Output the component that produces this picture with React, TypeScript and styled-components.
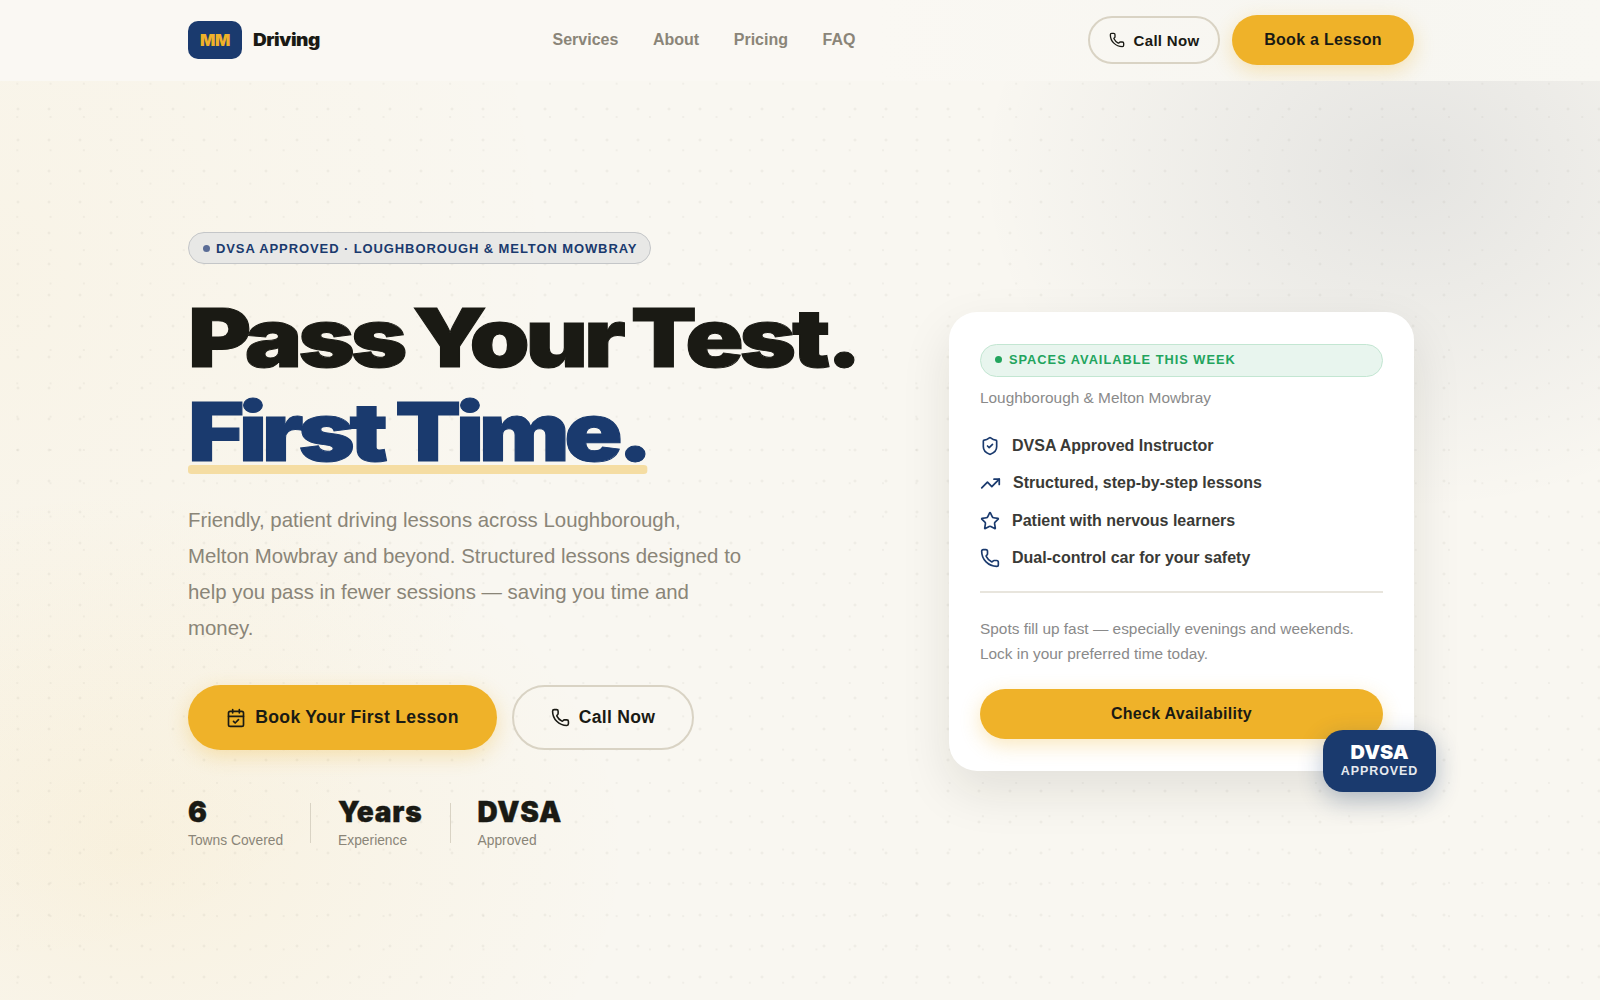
import React from "react";
import styled, { createGlobalStyle } from "styled-components";
import { CalendarCheck, Phone, ShieldCheck, Star, TrendingUp } from "lucide-react";

const Global = createGlobalStyle`
  * { box-sizing: border-box; }
  html, body { margin: 0; padding: 0; }
  body {
    font-family: "Liberation Sans", Arial, sans-serif;
    background: #faf8f3;
    color: #1a1a14;
  }
`;

const Display = `"Inter", "Liberation Sans", sans-serif`;

const Page = styled.div`
  min-height: 1000px;
  display: flex;
  flex-direction: column;
  background-color: #faf8f3;
`;

const Nav = styled.header`
  height: 81px;
  background: linear-gradient(90deg, #faf8f3 0%, #faf8f3 55%, #f7f6f1 85%, #f8f7f2 100%);
`;

const NavInner = styled.div`
  width: 1226px;
  height: 80px;
  margin-left: 188px;
  display: flex;
  align-items: center;
  justify-content: space-between;
`;

const Brand = styled.div`
  display: flex;
  align-items: center;
  gap: 11px;
  width: 132px;
`;

const BrandMark = styled.div`
  width: 54px;
  height: 38px;
  border-radius: 10px;
  background: #1a3a6e;
  color: #efb229;
  font-family: ${Display};
  font-weight: 900;
  font-size: 16px;
  letter-spacing: -0.3px;
  padding-bottom: 1px;
  display: flex;
  align-items: center;
  justify-content: center;
`;

const BrandName = styled.span`
  display: inline-block;
  transform: scaleX(1.12);
  transform-origin: left center;
  font-family: ${Display};
  font-weight: 900;
  font-size: 17px;
  letter-spacing: -0.4px;
  color: #1a1a14;
`;

const NavLinks = styled.nav`
  display: flex;
  gap: 34.6px;
  padding-bottom: 1px;
`;

const NavLink = styled.a`
  font-size: 16px;
  font-weight: 700;
  color: #8a8578;
`;

const NavActions = styled.div`
  display: flex;
  align-items: center;
  gap: 12px;
`;

const Pill = styled.button<{ $primary?: boolean; $h: number; $w?: number; $fs: number }>`
  display: inline-flex;
  align-items: center;
  justify-content: center;
  gap: 9px;
  height: ${(p) => p.$h}px;
  width: ${(p) => (p.$w ? `${p.$w}px` : "100%")};
  border-radius: 999px;
  font-family: inherit;
  font-weight: 700;
  font-size: ${(p) => p.$fs}px;
  letter-spacing: 0.3px;
  color: #1a1a14;
  padding: 0;
  background: ${(p) => (p.$primary ? "#efb229" : "transparent")};
  border: ${(p) => (p.$primary ? "none" : "2px solid #d9d3c4")};
  box-shadow: ${(p) => (p.$primary ? "0 6px 20px rgba(240, 180, 41, 0.3)" : "none")};
`;

const Hero = styled.main`
  flex: 1;
  display: flex;
  background-color: #f9f7f1;
  background-image:
    radial-gradient(circle, rgba(138, 133, 120, 0.12) 1px, transparent 1.2px),
    radial-gradient(circle, rgba(138, 133, 120, 0.08) 1px, transparent 1.2px),
    radial-gradient(ellipse 500px 360px at 130px 770px, rgba(240, 180, 41, 0.09), transparent 100%),
    radial-gradient(ellipse 560px 700px at 0 200px, rgba(240, 180, 41, 0.05), transparent 100%),
    radial-gradient(ellipse 430px 340px at 1410px 90px, rgba(26, 40, 70, 0.09), transparent 100%);
  background-size: 31px 31px, 33.3px 33.3px, auto, auto, auto;
  background-position: 2.5px 12.5px, 0.65px 19.35px, 0 0, 0 0, 0 0;
`;

const HeroInner = styled.div`
  width: 1226px;
  margin-left: 188px;
  display: grid;
  grid-template-columns: 1fr 465px;
  align-items: center;
`;

const Left = styled.div`
  margin-top: 2px;
  display: flex;
  flex-direction: column;
  align-items: flex-start;
`;

const Eyebrow = styled.div`
  display: inline-flex;
  align-items: center;
  gap: 6px;
  height: 32px;
  width: 463px;
  padding: 0 14px;
  border-radius: 999px;
  background: #e8e8e6;
  border: 1px solid #c4c6c8;
  font-size: 13px;
  font-weight: 700;
  letter-spacing: 0.9px;
  color: #1a3a6e;
  white-space: nowrap;
`;

const Dot = styled.span<{ $c: string }>`
  width: 7px;
  height: 7px;
  border-radius: 50%;
  background: ${(p) => p.$c};
  flex: none;
`;

const Heading = styled.h1`
  margin: 27px 0 0;
  font-family: ${Display};
  font-weight: 900;
  font-size: 81px;
  line-height: 94px;
  letter-spacing: -3.5px;
  word-spacing: -5px;
  color: #1a1a14;
  -webkit-text-stroke: 1px currentColor;
`;

const HeadLine = styled.span`
  display: block;
  width: max-content;
  transform: scaleX(1.19);
  transform-origin: left center;
`;

const Accent = styled.span`
  position: relative;
  display: block;
  width: max-content;
  letter-spacing: -4.6px;
  word-spacing: -1px;
  transform: scaleX(1.19);
  transform-origin: left center;
  color: #1a3a6e;

  &::after {
    content: "";
    position: absolute;
    left: 0;
    right: 0;
    bottom: 5px;
    height: 9px;
    border-radius: 3px;
    background: #f5dda3;
  }
`;

const Lead = styled.p`
  margin: 23px 0 0;
  width: 556px;
  font-size: 20.4px;
  line-height: 36px;
  color: #8a8578;
`;

const CtaRow = styled.div`
  margin-top: 39px;
  display: flex;
  gap: 15px;
`;

const Stats = styled.div`
  margin-top: 45px;
  display: flex;
  align-items: center;
  gap: 27px;
`;

const StatDivider = styled.span`
  width: 1px;
  height: 40px;
  background: #d9d3c4;
`;

const StatValue = styled.div`
  font-family: ${Display};
  font-weight: 900;
  font-size: 28px;
  line-height: 34px;
  letter-spacing: 0.8px;
  color: #1a1a14;
  -webkit-text-stroke: 0.4px currentColor;
`;

const StatLabel = styled.div`
  font-size: 13.8px;
  line-height: 20px;
  margin-top: 2px;
  color: #8a8578;
`;

const CardWrap = styled.div`
  position: relative;
  margin-top: 2px;
`;

const Card = styled.section`
  background: #fff;
  border-radius: 28px;
  padding: 32px 31px;
  box-shadow: 0 20px 50px rgba(26, 26, 20, 0.1);
`;

const Availability = styled.div`
  height: 33px;
  display: flex;
  align-items: center;
  gap: 7px;
  padding: 0 14px 1px;
  border-radius: 999px;
  background: #e8f5ee;
  border: 1px solid #c3e6d2;
  font-size: 12.8px;
  font-weight: 700;
  letter-spacing: 1px;
  color: #22a45d;
`;

const Location = styled.div`
  margin-top: 11px;
  font-size: 15.4px;
  line-height: 20px;
  color: #8a8a8a;
`;

const Features = styled.ul`
  list-style: none;
  margin: 26px 0 0;
  padding: 0;
  display: flex;
  flex-direction: column;
  gap: 13.4px;
`;

const Feature = styled.li`
  display: flex;
  align-items: center;
  gap: 12px;
  height: 24px;
  font-size: 16px;
  font-weight: 700;
  color: #3a3a36;

  svg {
    color: #1a3a6e;
    flex: none;
  }
`;

const Rule = styled.hr`
  margin: 21px 0 0;
  border: 0;
  height: 2px;
  background: #e8e5dd;
`;

const Note = styled.p`
  margin: 23px 0 0;
  font-size: 15.4px;
  line-height: 25px;
  color: #8a8a8a;
`;

const CardAction = styled.div`
  margin-top: 23px;
`;

const Badge = styled.div`
  position: absolute;
  right: -22px;
  bottom: -21px;
  width: 113px;
  height: 62px;
  border-radius: 20px;
  background: #1a3a6e;
  color: #fff;
  display: flex;
  flex-direction: column;
  align-items: center;
  justify-content: center;
  box-shadow: 0 8px 24px rgba(26, 58, 110, 0.3);
`;

const BadgeTitle = styled.div`
  font-family: ${Display};
  font-weight: 900;
  font-size: 19px;
  line-height: 20px;
  transform: scaleX(1.05);
`;

const BadgeSub = styled.div`
  font-size: 12.5px;
  font-weight: 700;
  line-height: 16px;
  letter-spacing: 0.9px;
  color: #e6e9ef;
`;

const features = [
  { icon: ShieldCheck, size: 20, text: "DVSA Approved Instructor" },
  { icon: TrendingUp, size: 21, text: "Structured, step-by-step lessons" },
  { icon: Star, size: 20, text: "Patient with nervous learners" },
  { icon: Phone, size: 20, text: "Dual-control car for your safety" },
];

const stats = [
  { value: "6", label: "Towns Covered" },
  { value: "Years", label: "Experience" },
  { value: "DVSA", label: "Approved" },
];

export default function App() {
  return (
    <Page>
      <Global />
      <Nav>
        <NavInner>
          <Brand>
            <BrandMark>MM</BrandMark>
            <BrandName>Driving</BrandName>
          </Brand>
          <NavLinks>
            <NavLink>Services</NavLink>
            <NavLink>About</NavLink>
            <NavLink>Pricing</NavLink>
            <NavLink>FAQ</NavLink>
          </NavLinks>
          <NavActions>
            <Pill $h={48} $w={132} $fs={15}>
              <Phone size={16} />
              Call Now
            </Pill>
            <Pill $primary $h={50} $w={182} $fs={16}>
              Book a Lesson
            </Pill>
          </NavActions>
        </NavInner>
      </Nav>
      <Hero>
        <HeroInner>
          <Left>
            <Eyebrow>
              <Dot $c="#5a6c96" />
              DVSA APPROVED · LOUGHBOROUGH &amp; MELTON MOWBRAY
            </Eyebrow>
            <Heading>
              <HeadLine>Pass Your Test.</HeadLine>
              <Accent>First Time.</Accent>
            </Heading>
            <Lead>
              Friendly, patient driving lessons across Loughborough, Melton Mowbray and beyond.
              Structured lessons designed to help you pass in fewer sessions — saving you time and
              money.
            </Lead>
            <CtaRow>
              <Pill $primary $h={65} $w={309} $fs={17.6}>
                <CalendarCheck size={20} />
                Book Your First Lesson
              </Pill>
              <Pill $h={65} $w={182} $fs={17.6}>
                <Phone size={19} />
                Call Now
              </Pill>
            </CtaRow>
            <Stats>
              {stats.map((s, i) => (
                <React.Fragment key={s.value}>
                  {i > 0 && <StatDivider />}
                  <div>
                    <StatValue>{s.value}</StatValue>
                    <StatLabel>{s.label}</StatLabel>
                  </div>
                </React.Fragment>
              ))}
            </Stats>
          </Left>
          <CardWrap>
            <Card>
              <Availability>
                <Dot $c="#22a45d" />
                SPACES AVAILABLE THIS WEEK
              </Availability>
              <Location>Loughborough &amp; Melton Mowbray</Location>
              <Features>
                {features.map((f) => (
                  <Feature key={f.text}>
                    <f.icon size={f.size} />
                    {f.text}
                  </Feature>
                ))}
              </Features>
              <Rule />
              <Note>
                Spots fill up fast — especially evenings and weekends. Lock in your preferred time
                today.
              </Note>
              <CardAction>
                <Pill $primary $h={50} $fs={16}>
                  Check Availability
                </Pill>
              </CardAction>
            </Card>
            <Badge>
              <BadgeTitle>DVSA</BadgeTitle>
              <BadgeSub>APPROVED</BadgeSub>
            </Badge>
          </CardWrap>
        </HeroInner>
      </Hero>
    </Page>
  );
}
